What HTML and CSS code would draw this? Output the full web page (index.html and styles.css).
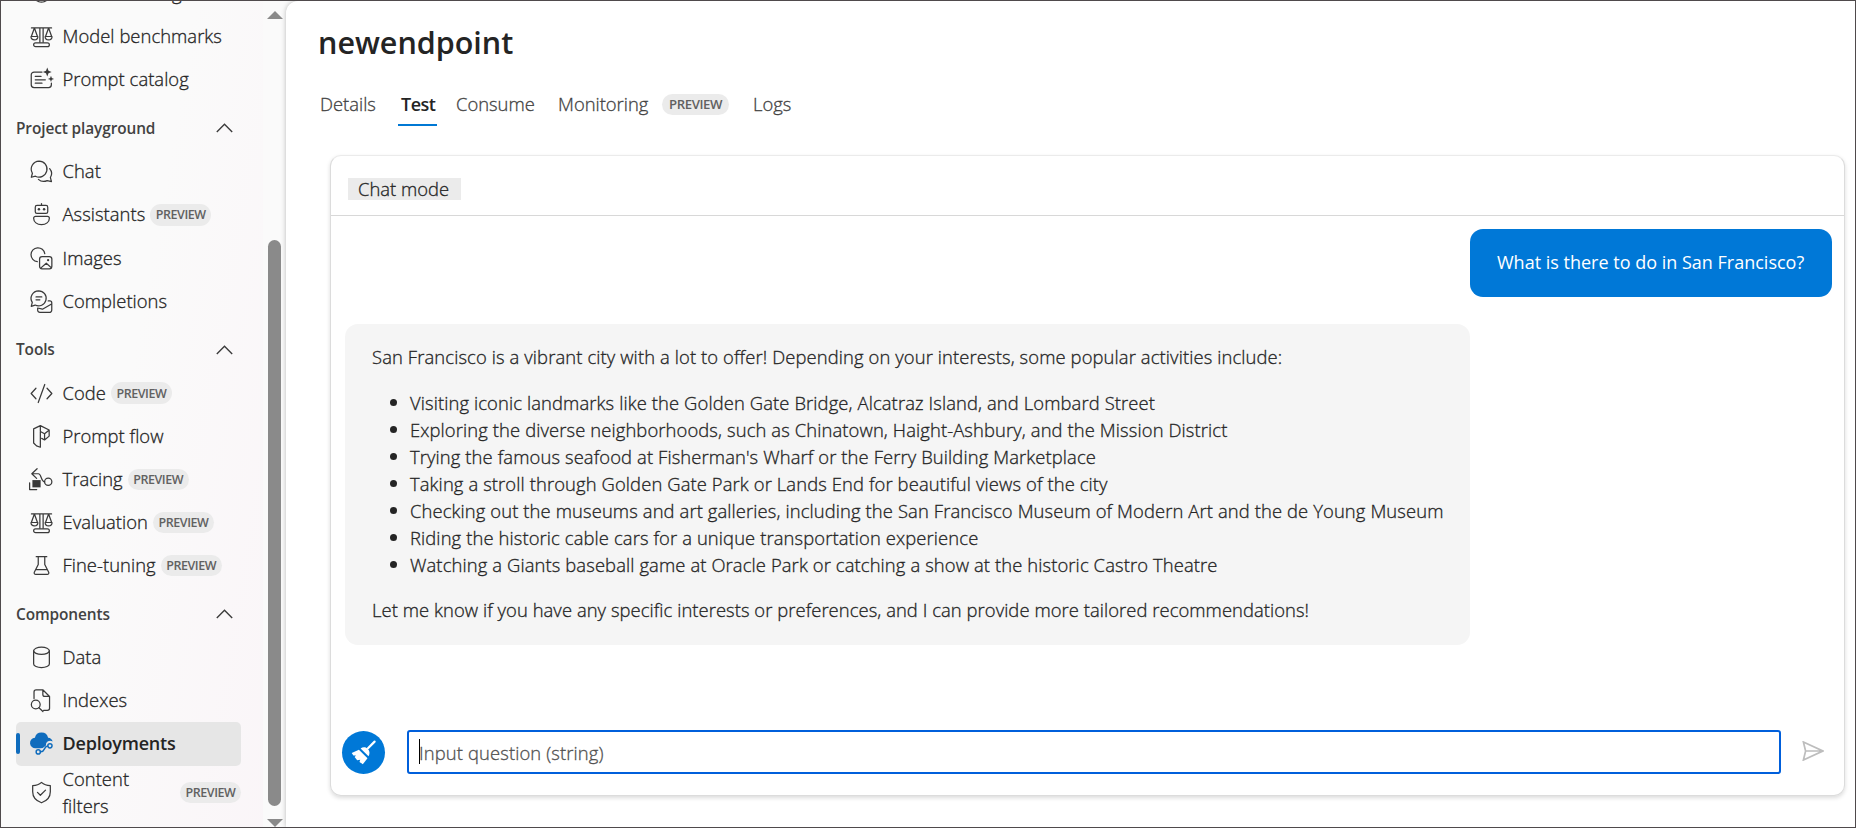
FILE: index.html
```
<!DOCTYPE html>
<html lang="en">
<head>
<meta charset="utf-8">
<title>newendpoint</title>
<link rel="stylesheet" href="styles.css">
</head>
<body>
<div class="app">
  <nav class="sidebar">
    <div class="nav">
      <div class="item item-cut">
        <svg class="icon" viewBox="0 0 24 24"><circle cx="12" cy="12" r="9"/></svg>
        <span class="label">Model catalog</span>
      </div>
      <div class="item">
        <svg class="icon" viewBox="0 0 24 24"><path d="M1.500 3h21M10.300 3v15M13.700 3v15M4.600 3.200 1.400 12M4.600 3.200 7.800 12M1 12h7.200c0 2.200-1.500 3.600-3.600 3.600S1 14.200 1 12zM19.400 3.200 16.200 12M19.400 3.200 22.600 12M15.800 12H23c0 2.200-1.500 3.600-3.600 3.600s-3.600-1.400-3.600-3.600z"/><rect x="3.800" y="18.600" width="16.400" height="4" rx="2"/></svg>
        <span class="label">Model benchmarks</span>
      </div>
      <div class="item">
        <svg class="icon" viewBox="0 0 24 24"><path d="M12.500 4.200H4.200A2.900 2.900 0 0 0 1.300 7.100v10.400a2.900 2.900 0 0 0 2.900 2.900h15.200a2.900 2.900 0 0 0 2.900-2.900v-1.600M5.500 8.800h6M5.500 12.300h10.500M5.500 15.800h7"/><path class="solid" d="M18-.4l1.300 3.300 3.300 1.300-3.300 1.300L18 8.800l-1.300-3.300-3.300-1.300 3.300-1.300zM21.900 8.200l.9 2.300 2.300.9-2.300.9-.9 2.300-.9-2.300-2.300-.9 2.300-.9z"/></svg>
        <span class="label">Prompt catalog</span>
      </div>
      <div class="group"><span>Project playground</span><svg class="chevron" viewBox="0 0 17 10"><path d="M.8 9 8.500 1.200 16.200 9"/></svg></div>
      <div class="item">
        <svg class="icon" viewBox="0 0 24 24"><path d="M9.500 1.200a8.300 8.300 0 1 1-3.800 15.700L1.400 18l1.100-4.200A8.300 8.300 0 0 1 9.500 1.200zM8.800 20.200c1.500 1.400 3.200 2.200 5.200 2.200 1.400 0 2.700-.3 3.900-.9l4.500 1-1.100-4.200a8 8 0 0 0-.8-9.300"/></svg>
        <span class="label">Chat</span>
      </div>
      <div class="item">
        <svg class="icon" viewBox="0 0 24 24"><path d="M12 .6v2M5.800 13.900h12.400a2 2 0 0 1 2 2c0 4-3.500 6.700-8.200 6.700s-8.200-2.700-8.200-6.700a2 2 0 0 1 2-2z"/><rect x="5.500" y="2.600" width="13" height="8.200" rx="1.800"/><circle class="solid" cx="9.300" cy="6.500" r="1.300"/><circle class="solid" cx="14.700" cy="6.500" r="1.300"/></svg>
        <span class="label">Assistants</span><span class="badge">PREVIEW</span>
      </div>
      <div class="item">
        <svg class="icon" viewBox="0 0 24 24"><path d="M7.600 15.200A7.200 7.200 0 1 1 15.400 7M11.400 21.800l5.600-4.900 5.400 4.900"/><rect x="10" y="10" width="12.800" height="12.800" rx="2.600"/><circle class="solid" cx="18.900" cy="13.700" r="1.200"/></svg>
        <span class="label">Images</span>
      </div>
      <div class="item">
        <svg class="icon" viewBox="0 0 24 24"><path d="M9 .8a7.900 7.900 0 1 1-3.700 14.900L1.300 17l1.100-4A7.900 7.900 0 0 1 9 .8zM6.300 7.200h6M6.300 10.200h4M19 11.400h1.700a2 2 0 0 1 2 2v7.500a2.500 2.500 0 0 1-2.500 2.500H10.400A2.300 2.300 0 0 1 8 21.100V18.900M8 18.800l5 1.200 9.500-5.400"/></svg>
        <span class="label">Completions</span>
      </div>
      <div class="group"><span>Tools</span><svg class="chevron" viewBox="0 0 17 10"><path d="M.8 9 8.500 1.200 16.200 9"/></svg></div>
      <div class="item">
        <svg class="icon" viewBox="0 0 24 24"><path d="M6.200 6.500 1.200 12l5 5.500M17.800 6.500l5 5.500-5 5.500M15.400 2.600 8.600 21.400"/></svg>
        <span class="label">Code</span><span class="badge">PREVIEW</span>
      </div>
      <div class="item">
        <svg class="icon" viewBox="0 0 24 24"><path d="M10.800.6 3.800 4v14.800l3 3 4 1.400zM10.800.6l9.200 4.600v6.400l-4.800 4V9.200l-4.400-2.400M15.200 9.200 19.800 5.400M15.200 15.600l-3-1.600"/></svg>
        <span class="label">Prompt flow</span>
      </div>
      <div class="item">
        <svg class="icon" viewBox="0 0 24 24"><path d="M7.400.8 1.900 6l5 4.800M2.200 6h6.600c3.200 0 2.600 8.400 6.600 8.400"/><circle cx="19" cy="14.400" r="3.800"/><path class="solid" d="M2.500 12.600h8.600v7.600H2.500z"/><path d="M-.4 15.500v7h7.400"/></svg>
        <span class="label">Tracing</span><span class="badge">PREVIEW</span>
      </div>
      <div class="item">
        <svg class="icon" viewBox="0 0 24 24"><path d="M1.500 3h21M10.300 3v15M13.700 3v15M4.600 3.200 1.400 12M4.600 3.200 7.800 12M1 12h7.200c0 2.200-1.500 3.600-3.600 3.600S1 14.200 1 12zM19.400 3.200 16.200 12M19.400 3.200 22.600 12M15.800 12H23c0 2.200-1.500 3.600-3.600 3.600s-3.600-1.400-3.600-3.600z"/><rect x="3.800" y="18.600" width="16.400" height="4" rx="2"/></svg>
        <span class="label">Evaluation</span><span class="badge">PREVIEW</span>
      </div>
      <div class="item">
        <svg class="icon" viewBox="0 0 24 24"><path d="M6.500 2.800h11M8.600 2.800v8.100L4.500 19a1.600 1.600 0 0 0 1.500 2.300h12a1.600 1.600 0 0 0 1.500-2.300l-4.100-8.100V2.800M6.400 16.200h11.200"/></svg>
        <span class="label">Fine-tuning</span><span class="badge">PREVIEW</span>
      </div>
      <div class="group"><span>Components</span><svg class="chevron" viewBox="0 0 17 10"><path d="M.8 9 8.500 1.200 16.200 9"/></svg></div>
      <div class="item">
        <svg class="icon" viewBox="0 0 24 24"><ellipse cx="12" cy="5" rx="8.200" ry="3.800"/><path d="M3.800 5v13.700c0 2.100 3.700 3.800 8.200 3.800s8.200-1.700 8.200-3.800V5"/></svg>
        <span class="label">Data</span>
      </div>
      <div class="item">
        <svg class="icon" viewBox="0 0 24 24"><path d="M4.200 10V3.200a2.200 2.200 0 0 1 2.200-2.200h7.200l6.800 6.800v12.400a2.200 2.200 0 0 1-2.200 2.200h-4M13.400 1.200v4.600a2 2 0 0 0 2 2h4.800"/><circle cx="6" cy="16.200" r="4.600"/><path d="m9.300 19.500 4.200 4"/></svg>
        <span class="label">Indexes</span>
      </div>
      <div class="item item-active">
        <svg class="icon icon-active" viewBox="0 0 24 24"><path class="solid" d="M12 .4a7 7 0 0 1 6.900 5.500A5.300 5.300 0 0 1 23.600 10a4.400 4.400 0 0 0-7 4.200l-3.300 2.600-2.300.2H6A5.400 5.400 0 0 1 5.100 6 7 7 0 0 1 12 .4z"/><circle cx="20.800" cy="14.400" r="2.200"/><circle cx="8.600" cy="20.800" r="2.200"/><path d="M10.900 20.600c5 .6 3-5.400 7.500-5.900"/></svg>
        <span class="label">Deployments</span>
      </div>
      <div class="item item-tall">
        <svg class="icon" viewBox="0 0 24 24"><path d="M12 1.400c2.400 2.200 5.700 3.300 9.200 3.400v6.400c0 5.600-3.600 9.500-9.200 11.500-5.600-2-9.200-5.900-9.200-11.500V4.800C6.300 4.700 9.600 3.600 12 1.400zM7.800 11.900l3 3 5.400-5.400"/></svg>
        <span class="label">Content filters</span><span class="badge">PREVIEW</span>
      </div>
    </div>
    <div class="scrollbar">
      <svg class="arrow" viewBox="0 0 16 8"><path d="M8 0 16 8H0z"/></svg>
      <div class="track"><div class="thumb"></div></div>
      <svg class="arrow" viewBox="0 0 16 8"><path d="M0 0h16L8 8z"/></svg>
    </div>
  </nav>
  <main class="main">
    <h1 class="title">newendpoint</h1>
    <div class="tabs">
      <span class="tab tab-details">Details</span>
      <span class="tab tab-selected">Test</span>
      <span class="tab tab-consume">Consume</span>
      <span class="tab tab-monitoring">Monitoring</span>
      <span class="badge badge-tab">PREVIEW</span>
      <span class="tab tab-logs">Logs</span>
    </div>
    <section class="card">
      <header class="card-head"><span class="mode">Chat mode</span></header>
      <div class="messages">
        <div class="question">What is there to do in San Francisco?</div>
        <div class="answer">
          <p>San Francisco is a vibrant city with a lot to offer! Depending on your interests, some popular activities include:</p>
          <ul>
            <li>Visiting iconic landmarks like the Golden Gate Bridge, Alcatraz Island, and Lombard Street</li>
            <li>Exploring the diverse neighborhoods, such as Chinatown, Haight-Ashbury, and the Mission District</li>
            <li>Trying the famous seafood at Fisherman's Wharf or the Ferry Building Marketplace</li>
            <li>Taking a stroll through Golden Gate Park or Lands End for beautiful views of the city</li>
            <li>Checking out the museums and art galleries, including the San Francisco Museum of Modern Art and the de Young Museum</li>
            <li>Riding the historic cable cars for a unique transportation experience</li>
            <li>Watching a Giants baseball game at Oracle Park or catching a show at the historic Castro Theatre</li>
          </ul>
          <p class="closing">Let me know if you have any specific interests or preferences, and I can provide more tailored recommendations!</p>
        </div>
      </div>
      <div class="composer">
        <div class="clear"><svg viewBox="0 0 43 43"><path class="handle" d="M32.600 10.600 26 17.200"/><path class="broom" d="M18.600 17.400c2.600-1.800 5.700-1.200 7.300.6 1.700 1.900 2.300 4.600.6 7.300z"/><path class="broom" d="M16.900 18.700 25.500 27.300 20.800 33.300 17.500 30.900 18.200 28.800 15.200 29.200 12.600 26.100 14 24.400 11.400 24.600 9.700 22z"/></svg></div>
        <div class="field"><span class="caret"></span>Input question (string)</div>
        <svg class="send" viewBox="0 0 22 20"><path d="M1.400 1 20.800 10 1.400 19 3.600 10zM3.600 10h16.500"/></svg>
      </div>
    </section>
  </main>
</div>
</body>
</html>
```
FILE: styles.css
```
* { box-sizing: border-box; }
body {
  margin: 0;
  font-family: "Open Sans", "Noto Sans", sans-serif;
  font-size: 18.4px;
  font-weight: 300;
  color: #242424;
  -webkit-text-stroke: .3px;
}
.app {
  display: flex;
  width: 1856px;
  height: 828px;
  border: 1px solid #4f4a4c;
  background: #fafafa;
  overflow: hidden;
}
.sidebar {
  display: flex;
  flex: none;
  width: 285px;
  background: linear-gradient(100deg, #fafafa 45%, #faf5f8);
}
.nav { width: 262px; padding-left: 15px; }
.item {
  position: relative;
  display: flex;
  align-items: center;
  width: 225px;
  height: 43.15px;
  padding-left: 14px;
  white-space: nowrap;
}
.item-cut { margin-top: -29px; }
.item-cut .label { letter-spacing: .3px; }
.icon {
  flex: none;
  width: 23px;
  height: 23px;
  margin-right: 9.5px;
  overflow: visible;
  fill: none;
  stroke: #3a3a3a;
  stroke-width: 1.3;
  stroke-linejoin: round;
  stroke-linecap: round;
}
.solid { fill: #3a3a3a; stroke: none; }
.label { padding-bottom: 2px; letter-spacing: .04px; }
.badge {
  flex: none;
  display: flex;
  align-items: center;
  justify-content: center;
  width: 61px;
  height: 21.5px;
  margin-left: 5px;
  border-radius: 11px;
  background: #ebebeb;
  color: #616161;
  font-size: 12.5px;
  font-weight: 600;
  letter-spacing: -.45px;
  -webkit-text-stroke: 0;
}
.group {
  display: flex;
  align-items: center;
  justify-content: space-between;
  width: 217px;
  height: 48.8px;
  padding-top: 5px;
  color: #424242;
  font-size: 15.4px;
  font-weight: 600;
  letter-spacing: -.1px;
  -webkit-text-stroke: 0;
}
.chevron { width: 17px; height: 10px; fill: none; stroke: #3a3a3a; stroke-width: 1.35; }
.item-active {
  border-radius: 5px;
  background: #e6e6e6;
  font-weight: 600;
  -webkit-text-stroke: 0;
}
.item-active .label { font-size: 18px; letter-spacing: -.2px; }
.item-active::before {
  content: "";
  position: absolute;
  left: 0;
  top: 11px;
  width: 4px;
  height: 21px;
  border-radius: 2px;
  background: #0f6cbd;
}
.icon-active { stroke: #0f6cbd; stroke-width: 1.5; }
.icon-active .solid { fill: #0f6cbd; }
.item-tall { height: 54px; line-height: 27px; }
.item-tall .label { width: 80px; white-space: normal; }
.item-tall .badge { margin-left: auto; }
.scrollbar {
  display: flex;
  flex-direction: column;
  align-items: center;
  width: 23px;
  padding-top: 10px;
  background: #fafafa;
}
.arrow { width: 16px; height: 8px; fill: #8a8a8a; }
.track { height: 800px; padding-top: 221px; }
.thumb { width: 13px; height: 566px; border-radius: 7px; background: #8a8a8a; }
.main {
  flex: 1;
  padding-left: 30px;
  background: #fff;
  border-radius: 12px 0 0 0;
  box-shadow: 0 0 5px rgba(0, 0, 0, .26);
}
.title {
  margin: 18px 0 0 2px;
  height: 46px;
  line-height: 46px;
  font-size: 30.5px;
  font-weight: 600;
  -webkit-text-stroke: 0;
}
.tabs {
  display: flex;
  height: 61px;
  margin-top: 19px;
  padding-left: 4px;
  color: #424242;
  line-height: 40px;
}
.tab { flex: none; }
.tab-details { width: 78px; }
.tab-selected {
  width: 39px;
  height: 42px;
  padding-left: 3px;
  border-bottom: 2px solid #0078d4;
  color: #242424;
  font-size: 18px;
  font-weight: 600;
  letter-spacing: -.5px;
  -webkit-text-stroke: 0;
}
.tab-consume { width: 102px; margin-left: 19px; }
.tab-monitoring { width: 104px; }
.badge-tab { width: 67px; margin: 9.5px 24px 0 0; font-size: 13.2px; line-height: 21px; }
.card {
  display: flex;
  flex-direction: column;
  width: 1515px;
  height: 641px;
  margin: 10px 0 0 14px;
  border: 1px solid #dcdcdc;
  border-top-color: #ebebeb;
  border-radius: 11px;
  box-shadow: 0 2px 4px rgba(0, 0, 0, .14);
}
.card-head { height: 60px; padding: 22px 0 0 17px; border-bottom: 1px solid #d8d8d8; }
.mode {
  display: block;
  width: 113px;
  height: 22px;
  padding-left: 10px;
  background: #ebebeb;
  line-height: 22px;
}
.messages { display: flex; flex-direction: column; height: 514px; padding: 13px 12px 0 14px; }
.question {
  align-self: flex-end;
  width: 362px;
  height: 68px;
  padding-left: 27px;
  border-radius: 13px;
  background: #0078d7;
  color: #fff;
  line-height: 67px;
  font-size: 18px;
  font-weight: 400;
  white-space: nowrap;
  -webkit-text-stroke: 0;
}
.answer {
  width: 1125px;
  height: 321px;
  margin-top: 27px;
  padding: 19px 0 0 27px;
  border-radius: 13px;
  background: #f5f5f5;
  line-height: 27px;
  letter-spacing: .11px;
  white-space: nowrap;
}
.answer p { margin: 0; }
.answer ul { margin: 19px 0 18px; padding: 0; list-style: none; }
.answer li { display: flex; align-items: center; padding-left: 17.5px; }
.answer .closing { letter-spacing: .06px; }
.answer li::before {
  content: "";
  width: 7px;
  height: 7px;
  margin-right: 13.5px;
  border-radius: 50%;
  background: #242424;
}
.composer { display: flex; align-items: flex-start; padding-left: 11px; }
.clear { width: 43px; height: 43px; margin-top: 1px; border-radius: 50%; background: #0078d7; }
.clear svg { display: block; }
.handle { stroke: #fff; stroke-width: 2.2; stroke-linecap: round; }
.broom { fill: #fff; }
.field {
  display: flex;
  align-items: center;
  width: 1374px;
  height: 44px;
  margin-left: 22px;
  padding: 1px 0 0 10px;
  border: 2px solid #005fdb;
  border-radius: 3px;
  color: #505050;
  letter-spacing: .12px;
}
.caret { width: 1px; height: 25px; margin: -2px -1px 0 0; background: #000; }
.send { width: 22px; height: 20px; margin: 11px 0 0 21px; fill: none; stroke: #bdbdbd; stroke-width: 1.7; }
```
